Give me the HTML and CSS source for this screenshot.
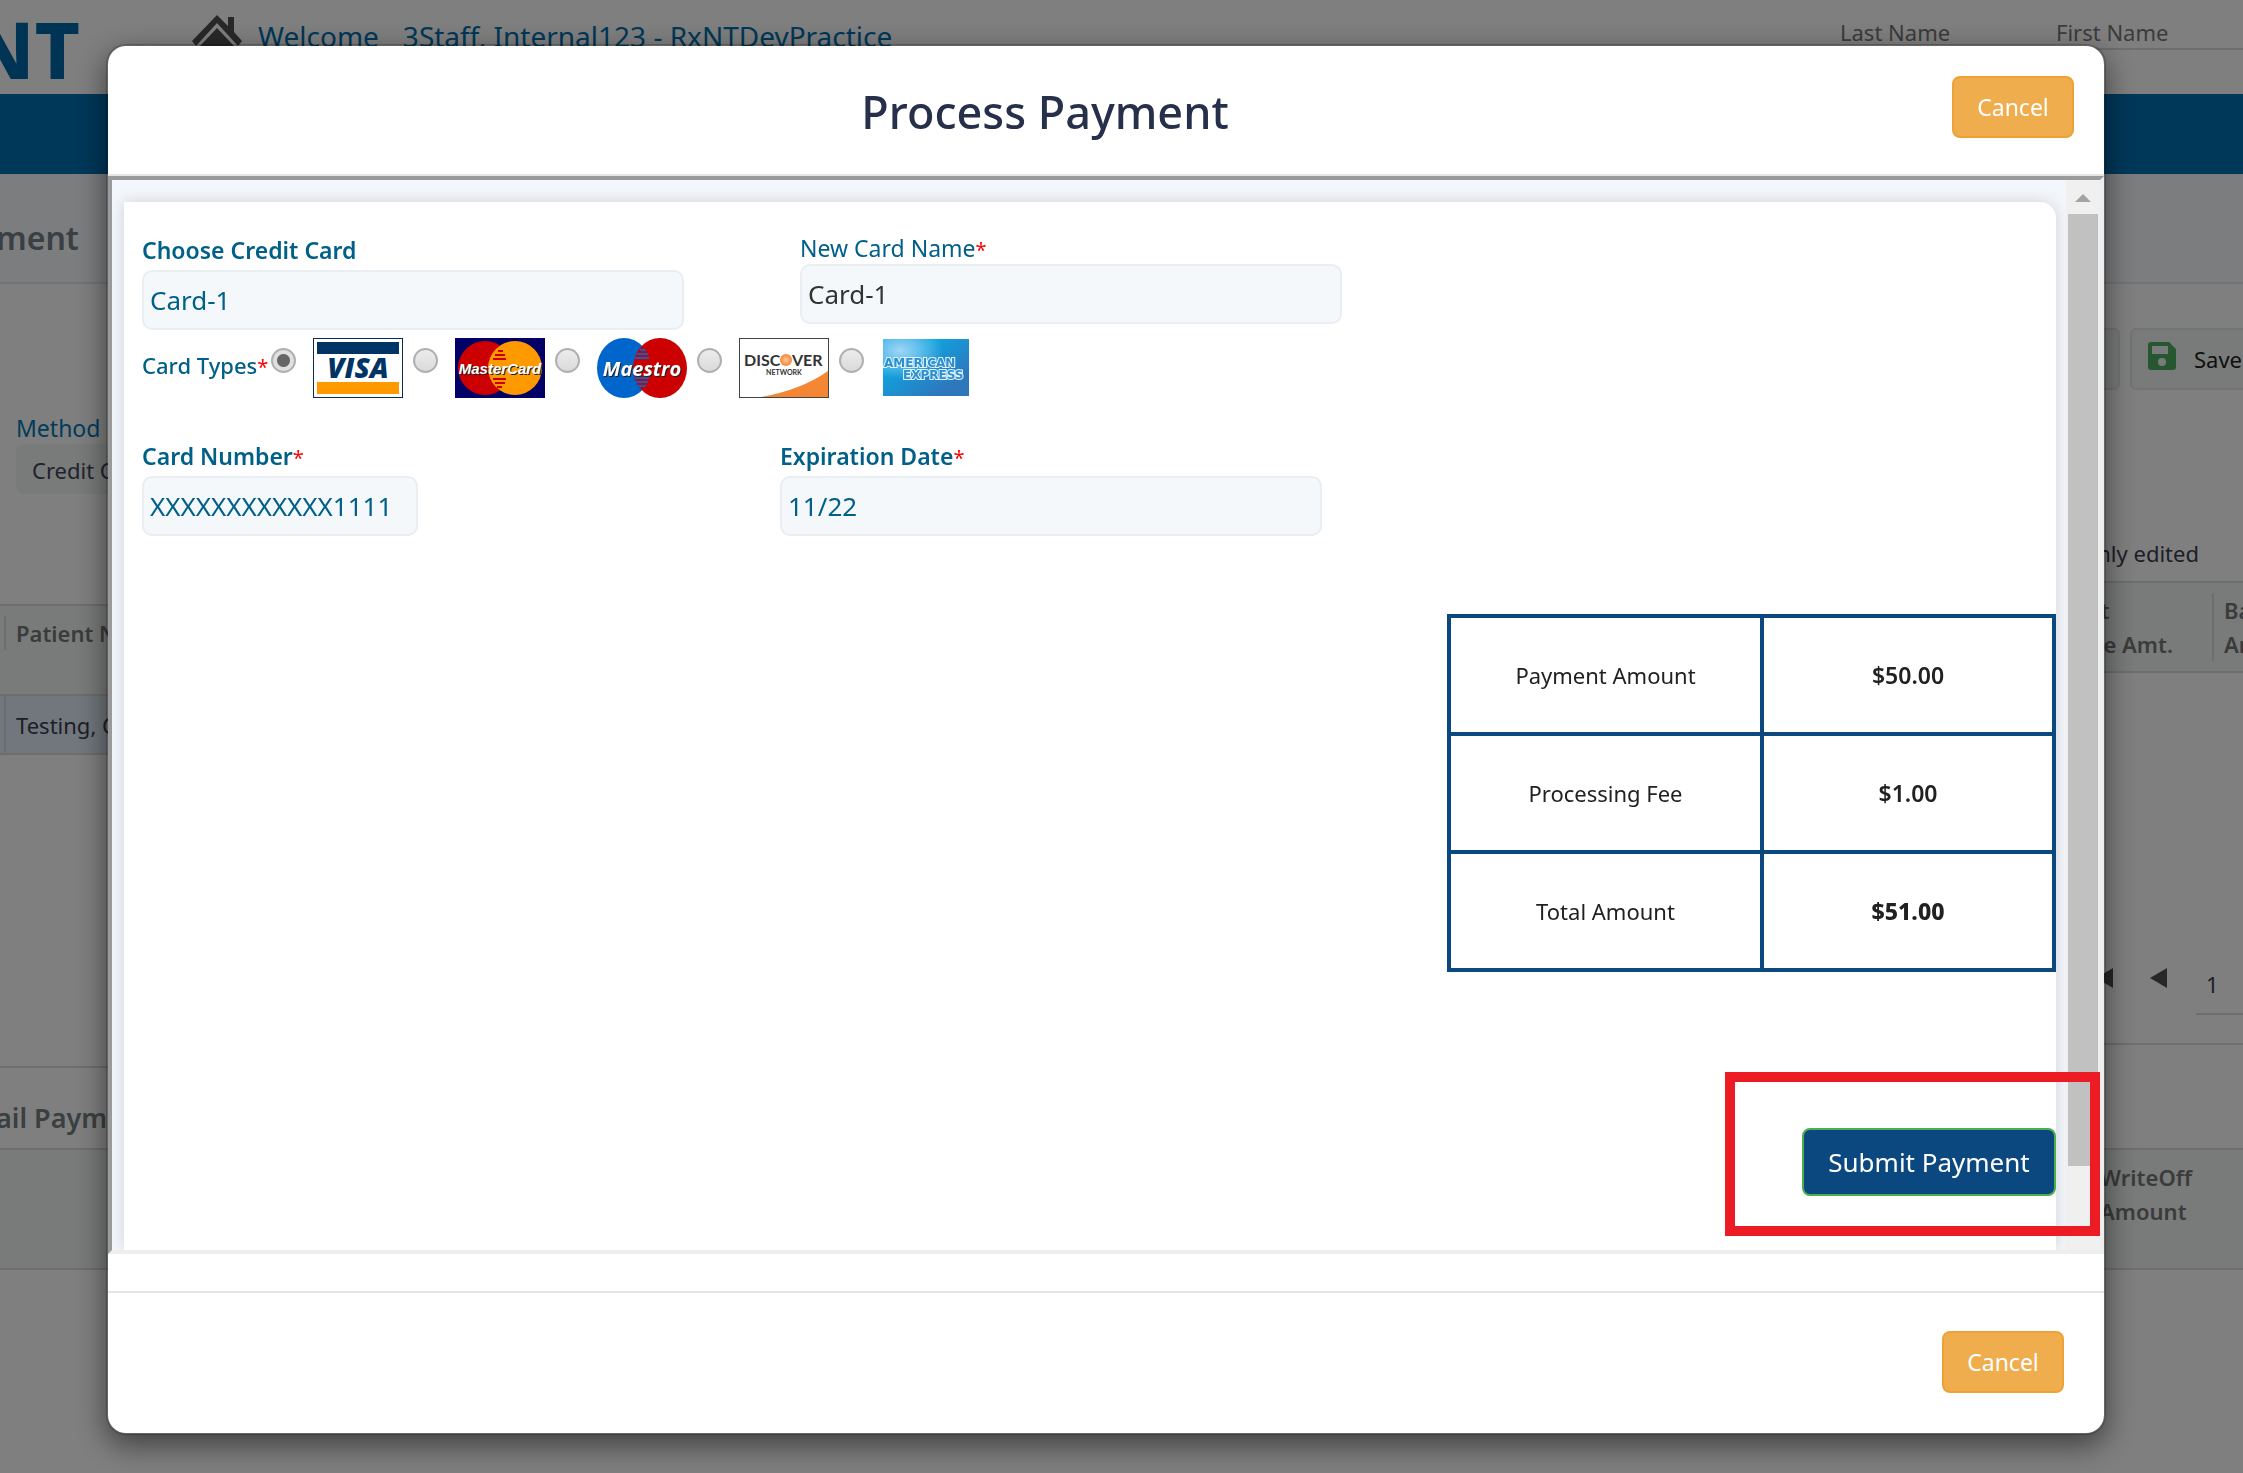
FILE: index.html
```html
<!DOCTYPE html>
<html lang="en">
<head>
    <meta charset="UTF-8">
    <meta name="viewport" content="width=device-width, initial-scale=1.0">
    <title>Process Payment</title>
    <link rel="stylesheet" href="styles.css">
</head>
<body>
    <!-- Page behind the modal -->
    <div class="page">
        <header class="topbar">
            <div class="logo"><span>NT</span></div>
            <a href="#" class="home" aria-label="Home">
                <svg width="50" height="44" viewBox="0 0 50 44">
                    <path fill="#505050" d="M25 0 L36 11 V2 H42 V17 L50 26 L46 31 L25 8 L4 31 L0 26 Z"/>
                    <path fill="#505050" d="M25 13 L42 31 V44 H30 V34 H20 V44 H8 V31 Z"/>
                </svg>
            </a>
            <a href="#" class="welcome"><span>Welcome</span><span>3Staff, Internal123 - RxNTDevPractice</span></a>
            <div class="patient-search">
                <input type="text" placeholder="Last Name" aria-label="Last Name">
                <input type="text" placeholder="First Name" aria-label="First Name">
            </div>
        </header>
        <nav class="navbar"></nav>
        <div class="page-title"><h1>ment</h1></div>

        <div class="columns">
            <section class="col-left">
                <div class="method">
                    <label for="method">Method</label>
                    <select id="method"><option>Credit Card</option></select>
                </div>
                <table class="grid patients">
                    <thead>
                        <tr><th class="gutter"></th><th><span class="sep">Patient Name</span></th></tr>
                    </thead>
                    <tbody>
                        <tr><td class="gutter"></td><td>Testing, Card</td></tr>
                    </tbody>
                </table>
            </section>
            <section class="col-right">
                <div class="toolbar">
                    <button type="button" class="tool" aria-label="New"></button>
                    <button type="button" class="tool save">
                        <svg width="28" height="28" viewBox="0 0 28 28">
                            <path fill="#4caf60" fill-rule="evenodd" d="M3 0 H21 L28 7 V25 Q28 28 25 28 H3 Q0 28 0 25 V3 Q0 0 3 0 Z M4 4 V12 H20 V4 Z M14 16 A4 4 0 1 0 14 24 A4 4 0 1 0 14 16 Z"/>
                        </svg>
                        Save
                    </button>
                </div>
                <p class="only-edited">only edited</p>
                <table class="grid amounts">
                    <thead>
                        <tr>
                            <th class="amt"><span>Patient<br>Balance Amt.</span></th>
                            <th class="bal"><span class="sep">Balance<br>Amount</span></th>
                        </tr>
                    </thead>
                </table>
                <div class="pager">
                    <button type="button" aria-label="First page">
                        <svg width="17" height="20" viewBox="0 0 17 20"><path fill="#505050" d="M17 0 V20 L0 10 Z"/></svg>
                    </button>
                    <button type="button" aria-label="Previous page">
                        <svg width="17" height="20" viewBox="0 0 17 20"><path fill="#505050" d="M17 0 V20 L0 10 Z"/></svg>
                    </button>
                    <input type="text" value="1" aria-label="Page">
                </div>
            </section>
        </div>

        <section class="detail">
            <h2>ail Payment</h2>
            <div class="detail-head"><span>WriteOff<br>Amount</span></div>
        </section>
    </div>

    <!-- Payment modal -->
    <div class="overlay">
        <div class="modal" role="dialog" aria-labelledby="modalTitle">
            <div class="modal-header">
                <h2 id="modalTitle">Process Payment</h2>
                <button type="button" class="btn btn-cancel">Cancel</button>
            </div>

            <div class="frame">
                <form class="panel" id="paymentForm">
                    <div class="row row-card">
                        <div class="field">
                            <label for="card">Choose Credit Card</label>
                            <select id="card" class="control"><option>Card-1</option></select>
                        </div>
                        <div class="field field-light">
                            <label for="cardName">New Card Name<span class="req">*</span></label>
                            <input type="text" id="cardName" class="control" value="Card-1">
                        </div>
                    </div>

                    <div class="card-types" role="radiogroup" aria-labelledby="typesLabel">
                        <span class="types-label" id="typesLabel">Card Types<span class="req">*</span></span>
                        <label class="card-type">
                            <input type="radio" name="type" aria-label="Visa" checked>
                            <svg width="90" height="60" viewBox="0 0 90 60">
                                <rect x="0.5" y="0.5" width="89" height="59" fill="#fff" stroke="#0a2a5c"/>
                                <rect x="4" y="4" width="82" height="12" fill="#003366"/>
                                <rect x="4" y="44" width="82" height="12" fill="#ff9900"/>
                                <text x="45" y="40" class="visa-text">VISA</text>
                            </svg>
                        </label>
                        <label class="card-type">
                            <input type="radio" name="type" aria-label="MasterCard">
                            <svg width="90" height="60" viewBox="0 0 90 60">
                                <rect width="90" height="60" fill="#000066"/>
                                <circle cx="30" cy="30" r="27" fill="#cc0000"/>
                                <circle cx="60" cy="30" r="27" fill="#ff9900"/>
                                <path stroke="#cc0000" stroke-width="2" d="M43 13H48M40 17H50M38 21H51M38 41H51M40 45H50M42 49H47"/>
                                <text x="45" y="36" class="mc-text">MasterCard</text>
                            </svg>
                        </label>
                        <label class="card-type">
                            <input type="radio" name="type" aria-label="Maestro">
                            <svg width="90" height="60" viewBox="0 0 90 60">
                                <ellipse cx="27" cy="30" rx="27" ry="30" fill="#0066cc"/>
                                <ellipse cx="63" cy="30" rx="27" ry="30" fill="#cc0000"/>
                                <path stroke="#0066cc" stroke-width="2" d="M43 12H49M40 16H51M38 20H52M38 40H52M39 44H51M41 48H49"/>
                                <text x="45" y="38" class="maestro-text">Maestro</text>
                            </svg>
                        </label>
                        <label class="card-type">
                            <input type="radio" name="type" aria-label="Discover">
                            <svg width="90" height="60" viewBox="0 0 90 60">
                                <defs>
                                    <radialGradient id="orb"><stop offset="0" stop-color="#fcc79a"/><stop offset="1" stop-color="#f58634"/></radialGradient>
                                </defs>
                                <rect x="0.5" y="0.5" width="89" height="59" fill="#fff" stroke="#444"/>
                                <path fill="#f58634" d="M22 59 Q62 52 89 33 V59 Z"/>
                                <text x="5" y="28" class="discover-text">DISC</text>
                                <circle cx="47" cy="22" r="6" fill="url(#orb)"/>
                                <text x="53" y="28" class="discover-text">VER</text>
                                <text x="45" y="37" class="network-text">NETWORK</text>
                            </svg>
                        </label>
                        <label class="card-type">
                            <input type="radio" name="type" aria-label="American Express">
                            <svg width="90" height="60" viewBox="0 0 90 60">
                                <defs>
                                    <linearGradient id="amex" x1="0" y1="0" x2="1" y2="1"><stop offset="0.3" stop-color="#0fa3df"/><stop offset="0.8" stop-color="#2e77bc"/></linearGradient>
                                    <radialGradient id="glow" cx="0.2" cy="0.2" r="0.5"><stop offset="0" stop-color="#a0d6f7"/><stop offset="1" stop-color="#a0d6f7" stop-opacity="0"/></radialGradient>
                                </defs>
                                <rect x="2" y="1" width="86" height="57" fill="url(#amex)"/>
                                <rect x="2" y="1" width="86" height="57" fill="url(#glow)"/>
                                <text x="3" y="29" class="amex-text">AMERICAN</text>
                                <text x="22" y="41" class="amex-text">EXPRESS</text>
                            </svg>
                        </label>
                    </div>

                    <div class="row row-number">
                        <div class="field field-number">
                            <label for="cardNumber">Card Number<span class="req">*</span></label>
                            <input type="text" id="cardNumber" class="control" value="XXXXXXXXXXXX1111">
                        </div>
                        <div class="field">
                            <label for="expiration">Expiration Date<span class="req">*</span></label>
                            <input type="text" id="expiration" class="control" value="11/22">
                        </div>
                    </div>

                    <table class="totals">
                        <tr><th scope="row">Payment Amount</th><td>$50.00</td></tr>
                        <tr><th scope="row">Processing Fee</th><td>$1.00</td></tr>
                        <tr class="total"><th scope="row">Total Amount</th><td>$51.00</td></tr>
                    </table>

                    <button type="submit" class="btn btn-submit">Submit Payment</button>
                </form>
                <div class="scrollbar">
                    <svg width="34" height="34" viewBox="0 0 34 34"><path fill="#a3a3a3" d="M17 14 L25 22 H9 Z"/></svg>
                    <div class="thumb"></div>
                </div>
            </div>

            <div class="modal-footer">
                <button type="button" class="btn btn-cancel">Cancel</button>
            </div>

            <div class="highlight"></div>
        </div>
    </div>
</body>
</html>
```
FILE: styles.css
```css
:root {
    --blue: #006088;
    --navy: #0b487f;
    --orange: #f0ad4e;
    --line: #dcdcdc;
    --head: #f2f7f4;
}

* {
    box-sizing: border-box;
}

body {
    margin: 0;
    overflow: hidden;
    background: #fff;
    color: #212121;
    font-family: "Noto Sans", "Open Sans", sans-serif;
    font-size: 22px;
    line-height: 32px;
}

h1, h2, p {
    margin: 0;
}

input, select, button {
    font: inherit;
    color: inherit;
    appearance: none;
    border-radius: 0;
}

/* ---------- page behind the modal ---------- */

.topbar {
    display: flex;
    align-items: flex-start;
    height: 94px;
}

.logo {
    display: flex;
    justify-content: flex-end;
    flex: none;
    width: 80px;
    margin-right: 112px;
    overflow: hidden;
    color: #0068a8;
    font-size: 78px;
    font-weight: 800;
    line-height: 98px;
}

.home {
    padding-top: 15px;
}

.welcome {
    display: flex;
    gap: 24px;
    margin: 16px auto 0 16px;
    color: #0070b0;
    font-size: 28px;
    line-height: 40px;
    text-decoration: none;
}

.patient-search {
    display: grid;
    grid-template-columns: 200px 187px;
    gap: 16px;
}

.patient-search input {
    width: 100%;
    height: 50px;
    padding: 16px 0 0;
    border: none;
    border-bottom: 2px solid var(--line);
    background: none;
}

.patient-search input::placeholder {
    color: #777;
    opacity: 1;
}

.navbar {
    height: 80px;
    background: #0070b4;
}

.page-title {
    height: 110px;
    padding-top: 44px;
    border-bottom: 2px solid #e8e8e8;
    background: #f8fafd;
}

.page h1,
.page h2 {
    margin-left: -4px;
    color: #757f85;
    font-weight: 600;
    line-height: 40px;
}

.page h1 {
    font-size: 32px;
}

.columns {
    display: grid;
    grid-template-columns: 1fr 1fr;
    align-items: start;
}

.col-left {
    height: 784px;
    padding-top: 128px;
    border-bottom: 2px solid var(--line);
}

.method {
    display: flex;
    flex-direction: column;
    width: 300px;
    margin: 0 0 110px 16px;
    color: #0078b8;
}

.method label {
    font-size: 23px;
}

.method select {
    height: 50px;
    padding: 2px 16px 0;
    border: none;
    border-radius: 8px;
    background: var(--head);
    color: #45455c;
}

.grid {
    width: 100%;
    border-spacing: 0;
    text-align: left;
    line-height: 34px;
}

.grid th {
    height: 92px;
    padding: 10px 0;
    border-top: 2px solid var(--line);
    border-bottom: 2px solid var(--line);
    background: var(--head);
    color: #777;
    font-weight: 600;
    vertical-align: top;
}

.grid td {
    height: 59px;
    padding: 0 10px;
    border-left: 2px solid var(--line);
    border-bottom: 2px solid var(--line);
    background: #e3eefa;
    color: #3c3c50;
}

.grid .gutter {
    width: 4px;
    padding: 0;
    border-left: none;
}

.sep {
    display: inline-block;
    padding-left: 10px;
    border-left: 2px solid var(--line);
}

.col-right {
    height: 761px;
    padding-top: 44px;
    border-bottom: 2px solid var(--line);
}

.toolbar {
    display: flex;
    justify-content: flex-end;
    gap: 10px;
    margin-right: -30px;
}

.tool {
    display: flex;
    align-items: center;
    gap: 18px;
    width: 143px;
    height: 62px;
    padding: 0 16px;
    border: 2px solid #e4e8e6;
    border-radius: 6px;
    background: var(--head);
}

.tool svg {
    flex: none;
    margin-bottom: 6px;
}

.only-edited {
    margin: 147px 44px 12px 0;
    color: #3c3c50;
    text-align: right;
}

.amounts {
    table-layout: fixed;
}

.amounts .amt {
    padding-right: 39px;
    text-align: right;
}

.amounts .amt span {
    display: inline-block;
    text-align: left;
}

.amounts .bal {
    width: 31px;
    overflow: hidden;
}

.pager {
    display: flex;
    justify-content: flex-end;
    align-items: flex-start;
    margin-top: 290px;
}

.pager button {
    height: 28px;
    margin-right: 37px;
    padding: 0;
    border: none;
    background: none;
}

.pager button + button {
    margin-right: 29px;
}

.pager input {
    width: 47px;
    height: 52px;
    padding: 0 10px 8px;
    border: none;
    border-bottom: 2px solid var(--line);
    background: none;
    color: #3c3c50;
}

.page h2 {
    padding: 30px 0 10px;
    font-size: 27px;
}

.detail-head {
    display: flex;
    justify-content: flex-end;
    height: 122px;
    padding: 10px 51px;
    border-top: 2px solid var(--line);
    border-bottom: 2px solid var(--line);
    background: var(--head);
    color: #777;
    font-weight: 600;
    line-height: 34px;
}

/* ---------- modal ---------- */

.overlay {
    position: fixed;
    inset: 0;
    display: flex;
    padding: 44px 137px 38px 106px;
    background: rgba(0, 0, 0, 0.5);
}

.modal {
    position: relative;
    display: flex;
    flex: 1;
    flex-direction: column;
    border: 2px solid rgba(0, 0, 0, 0.2);
    border-radius: 20px;
    background: #fff;
    background-clip: padding-box;
    box-shadow: 0 10px 30px rgba(0, 0, 0, 0.5);
}

.modal-header {
    display: flex;
    align-items: flex-start;
    height: 130px;
    padding: 30px;
    border-bottom: 2px solid #e5e5e5;
}

.modal-header h2 {
    flex: 1;
    padding-top: 4px;
    color: #27304a;
    font-size: 45px;
    font-weight: 500;
    line-height: 64px;
    text-align: center;
}

.btn {
    border: 2px solid;
    border-radius: 8px;
    color: #fff;
    cursor: pointer;
}

.btn-cancel {
    width: 122px;
    height: 62px;
    border-color: #eea236;
    background: var(--orange);
    font-size: 23px;
}

.frame {
    display: flex;
    flex: 1;
    overflow: hidden;
    border: 4px solid;
    border-color: #9a9a9a #eee #eee #9a9a9a;
    background: #f3f7fc;
}

.panel {
    display: flex;
    flex: 1;
    flex-direction: column;
    margin: 22px 10px 0 12px;
    padding: 30px 0 0 18px;
    border-radius: 0 16px 0 0;
    background: #fff;
    box-shadow: 0 0 16px rgba(0, 0, 0, 0.15);
}

.row {
    display: grid;
}

.row-card {
    grid-template-columns: 658px 542px;
}

.row-number {
    grid-template-columns: 638px 542px;
    margin-top: 42px;
}

.field {
    display: flex;
    flex-direction: column;
    gap: 4px;
    width: 542px;
    color: var(--blue);
}

.row-card .field {
    padding-top: 2px;
}

.row-card .field-light {
    gap: 0;
    padding-top: 0;
}

.field-number {
    width: 276px;
}

.field label {
    height: 32px;
    font-size: 23px;
    font-weight: 600;
}

.field-light label {
    font-weight: 400;
}

.field-light .control {
    color: #333;
}

.req {
    color: #f00;
    font-size: 20px;
    font-weight: 400;
    line-height: 1;
}

.control {
    width: 100%;
    height: 60px;
    padding: 0 6px;
    border: 2px solid #e9eef3;
    border-radius: 10px;
    background: #f4f8fb;
    font-size: 26px;
}

.card-types {
    display: flex;
    align-items: flex-start;
    margin-top: 8px;
}

.types-label {
    width: 129px;
    padding-top: 11px;
    color: var(--blue);
    font-weight: 500;
    white-space: nowrap;
}

.card-type {
    display: flex;
    align-items: flex-start;
    gap: 17px;
    margin-right: 10px;
}

.card-type input {
    width: 25px;
    height: 25px;
    margin: 10px 0 0;
    border: 2px solid #b0b0b0;
    border-radius: 50%;
    background: linear-gradient(#ececec, #dadada);
}

.card-type input:checked {
    background: radial-gradient(circle, #666 6px, #e0e0e0 7px);
}

.visa-text {
    fill: #003366;
    font: italic 800 28px "Open Sans", sans-serif;
    text-anchor: middle;
}

.mc-text {
    fill: #fff;
    font: italic 700 15px "Liberation Sans", sans-serif;
    text-anchor: middle;
    text-shadow: 1px 1px 0 #222;
}

.maestro-text {
    fill: #fff;
    font: italic 700 20px "Open Sans", sans-serif;
    text-anchor: middle;
    text-shadow: 1px 1px 0 #222;
}

.discover-text {
    fill: #333;
    font: 700 16px Lato, sans-serif;
}

.network-text {
    fill: #333;
    font: 700 7px Lato, sans-serif;
    text-anchor: middle;
}

.amex-text {
    fill: #2b8fd0;
    stroke: #e4f4fd;
    stroke-width: 2px;
    paint-order: stroke;
    font: 700 12px "DejaVu Sans", sans-serif;
}

.totals {
    align-self: flex-end;
    width: 609px;
    margin-top: 78px;
    border-collapse: collapse;
    text-align: center;
}

.totals th,
.totals td {
    height: 118px;
    padding: 0;
    border: 4px solid var(--navy);
}

.totals th {
    width: 313px;
    font-weight: 400;
}

.totals td {
    font-size: 23px;
    font-weight: 600;
}

.totals .total td {
    font-weight: 800;
}

.btn-submit {
    align-self: flex-end;
    width: 254px;
    height: 68px;
    margin-top: 156px;
    border-color: #4cae4c;
    background: var(--navy);
    font-size: 26px;
}

.scrollbar {
    display: flex;
    flex-direction: column;
    width: 34px;
    padding: 0 2px 84px;
    background: #f0f0f0;
}

.scrollbar svg {
    margin: 0 -2px;
}

.thumb {
    flex: 1;
    background: #c1c1c1;
}

.modal-footer {
    display: flex;
    justify-content: flex-end;
    height: 142px;
    margin-top: 37px;
    padding: 38px 40px;
    border-top: 2px solid #e5e5e5;
}

/* callout around the submit button */
.highlight {
    position: absolute;
    right: 4px;
    bottom: 197px;
    width: 375px;
    height: 164px;
    border: 10px solid #ed1c24;
}
```
